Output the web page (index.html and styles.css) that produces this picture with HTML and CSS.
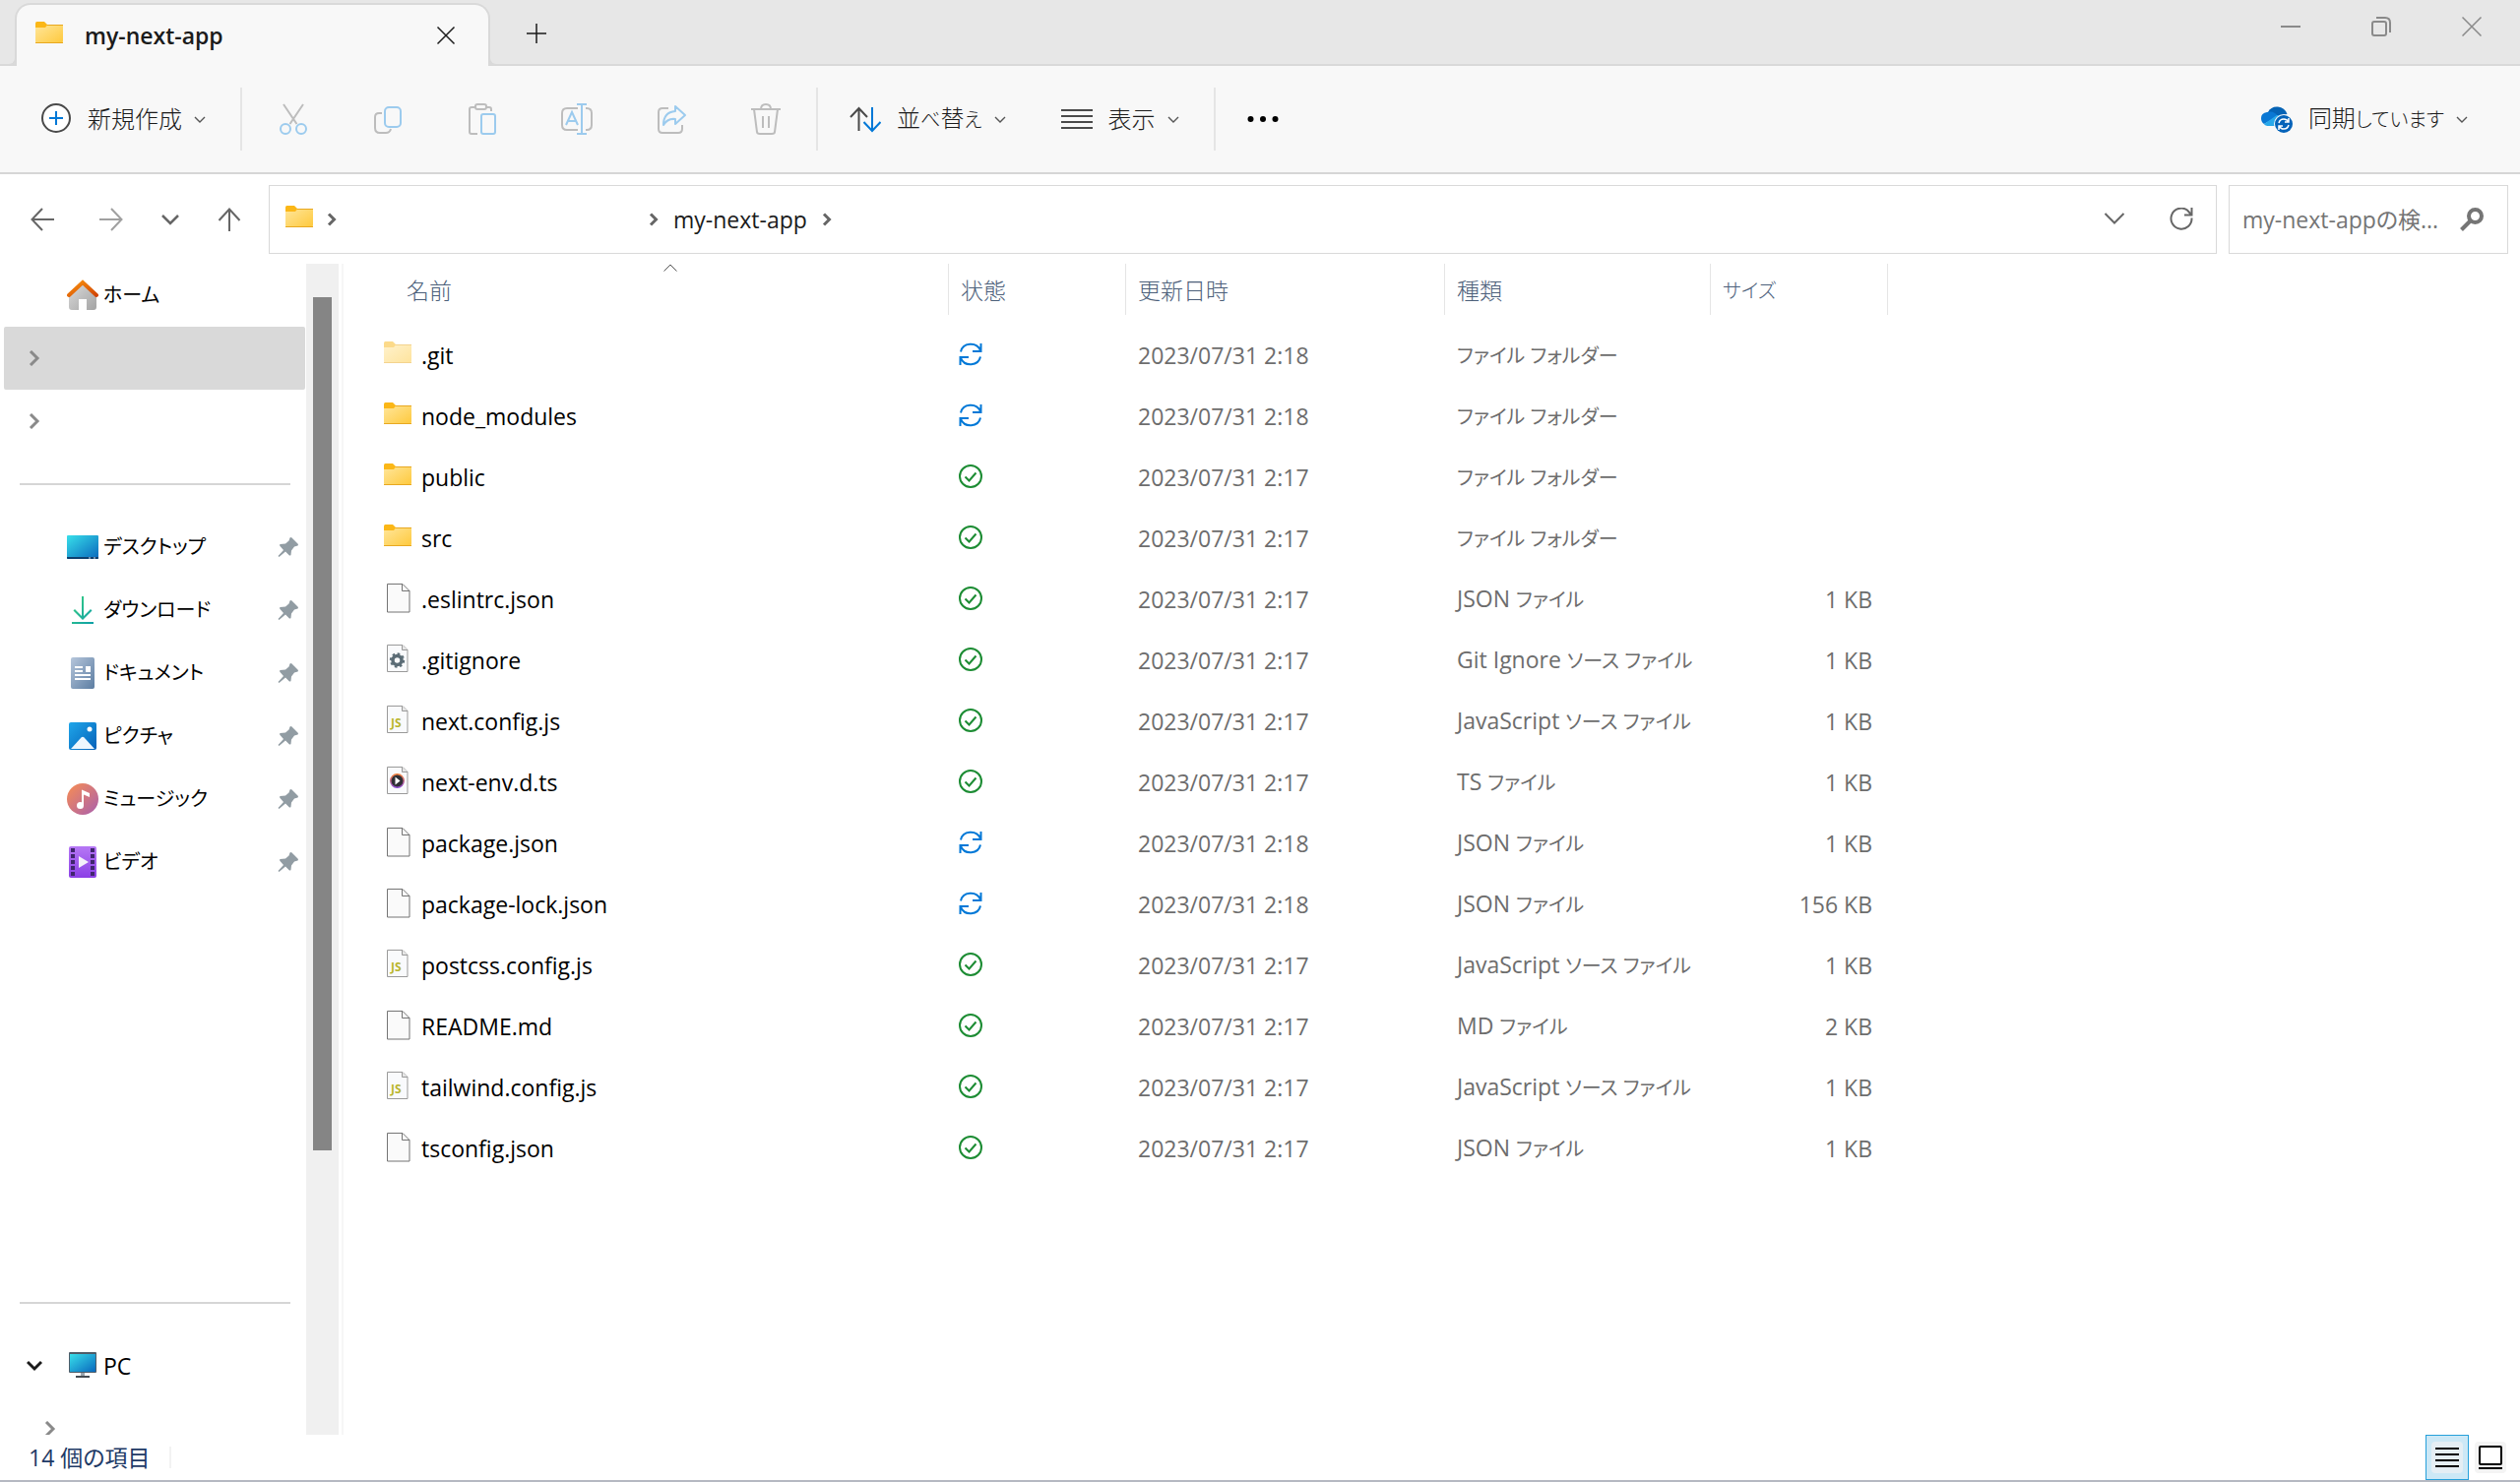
FILE: index.html
```html
<!DOCTYPE html>
<html lang="ja">
<head>
<meta charset="utf-8">
<title>my-next-app</title>
<meta name="viewport" content="width=device-width, initial-scale=1">
<link rel="stylesheet" href="styles.css">
</head>
<body>
<svg class="defs" aria-hidden="true">
  <defs>
    <linearGradient id="gFolder" x1="0" y1="0" x2="1" y2="1"><stop offset="0" stop-color="#ffe69b"/><stop offset="1" stop-color="#fec93c"/></linearGradient>
    <linearGradient id="gRoof" x1="0" y1="0" x2="1" y2="1"><stop offset="0" stop-color="#f9920e"/><stop offset="1" stop-color="#d14405"/></linearGradient>
    <linearGradient id="gWall" x1="0" y1="0" x2="1" y2="1"><stop offset="0" stop-color="#dcdcdc"/><stop offset="1" stop-color="#a3a3a3"/></linearGradient>
    <linearGradient id="gDesk" x1="0" y1="0" x2="1" y2="1"><stop offset="0" stop-color="#38dfea"/><stop offset="1" stop-color="#0968bd"/></linearGradient>
    <linearGradient id="gDown" x1="0" y1="0" x2="1" y2="1"><stop offset="0" stop-color="#3bd080"/><stop offset="1" stop-color="#0d9fa8"/></linearGradient>
    <linearGradient id="gDoc" x1="0" y1="0" x2="1" y2="1"><stop offset="0" stop-color="#b6c6db"/><stop offset="1" stop-color="#5c7da2"/></linearGradient>
    <linearGradient id="gPic" x1="0" y1="0" x2="1" y2="1"><stop offset="0" stop-color="#1fa6ea"/><stop offset="1" stop-color="#0561b8"/></linearGradient>
    <linearGradient id="gMus" x1="0" y1="0" x2="1" y2="1"><stop offset="0" stop-color="#f98e52"/><stop offset="1" stop-color="#a95fae"/></linearGradient>
    <linearGradient id="gVid" x1="0" y1="0" x2="0" y2="1"><stop offset="0" stop-color="#b678f5"/><stop offset="1" stop-color="#8b3fe6"/></linearGradient>
    <linearGradient id="gPlay" x1="0" y1="0" x2="0" y2="1"><stop offset="0" stop-color="#f2803b"/><stop offset="1" stop-color="#8b4ad0"/></linearGradient>
  </defs>
  <symbol id="folder" viewBox="0 0 32 32"><path d="M2 3.500q0-1.500 1.500-1.500h7.500l3 3v4H2z" fill="#fbb717"/><path d="M2 8h10l2.500-3H28.500q1.500 0 1.500 1.500v15q0 2.500-1.500 2.500h-25Q2 24 2 22z" fill="url(#gFolder)"/><path d="M14 5.500H30M2 23.500H30" stroke="#e8a820" fill="none"/></symbol>
  <symbol id="file" viewBox="0 0 32 32"><path d="M5.500.5H21l7 7v21.500H5.500z" fill="#fafafa" stroke="#757575"/><path d="M20.500.5v7H28" fill="none" stroke="#757575"/></symbol>
  <symbol id="page" viewBox="0 0 32 32"><path d="M5.500.5H21l5 5v22H5.500z" fill="#f9fafc" stroke="#9a9a9a"/><path d="M20.500.5v5H26" fill="#e6e6e6" stroke="#9a9a9a"/></symbol>
  <symbol id="gear" viewBox="0 0 32 32"><use href="#page"/><circle cx="15.500" cy="16" r="4.500" fill="none" stroke="#5b6c76" stroke-width="3.500"/><circle cx="15.500" cy="16" r="6.700" fill="none" stroke="#5b6c76" stroke-width="2" stroke-dasharray="2.600 2.660"/></symbol>
  <symbol id="ts" viewBox="0 0 32 32"><use href="#page"/><circle cx="15.500" cy="14.500" r="6.700" fill="#2f2f35" stroke="url(#gPlay)" stroke-width="1.500"/><path d="M13.500 10.500v8l5-4z" fill="#fff"/></symbol>
  <symbol id="ok" viewBox="0 0 28 28"><circle cx="14" cy="13" r="11" fill="none" stroke="#1c8c33" stroke-width="2"/><path d="M8.500 13.500l4 4 7-8" fill="none" stroke="#1c8c33" stroke-width="2"/></symbol>
  <symbol id="sync" viewBox="0 0 28 28"><path d="M4 10.500C6 1 20 0 24 9M24.500 2v8H16M24 15.500C22 25 8 26 4 17M3.500 24v-8H12" fill="none" stroke="#0078d7" stroke-width="2"/></symbol>
  <symbol id="down" viewBox="0 0 12 12"><path d="M1 4l5 5 5-5" fill="none" stroke="#555" stroke-width="1.400"/></symbol>
  <symbol id="right" viewBox="0 0 16 16"><path d="M5 2.500L10.500 8 5 13.500" fill="none" stroke="currentColor" stroke-width="3"/></symbol>
  <symbol id="twist" viewBox="0 0 16 16"><path d="M4 1l7 7-7 7" fill="none" stroke="currentColor" stroke-width="3"/></symbol>
  <symbol id="pin" viewBox="0 0 22 22"><path d="M12.500 1.500q1-1 2 0l6 6q1 1 0 2l-3.500 1-3 4-.5 4.500q-1 1-2 0L8 15.500l-6.500 5.500-1-1L6 14 2.500 10q-1-1 0-2L8 7.500l3.500-3z" fill="#919ca3"/></symbol>
</svg>

<header class="titlebar">
  <div class="tab">
    <svg class="icon32"><use href="#folder"/></svg>
    <h1 class="tab-title">my-next-app</h1>
    <button class="bare" aria-label="タブを閉じる"><svg class="icon20" viewBox="0 0 20 20"><path d="M1.500 1.500l17 17M18.500 1.500l-17 17" stroke="#1b1b1b" stroke-width="1.500"/></svg></button>
  </div>
  <button class="bare new-tab" aria-label="新しいタブ"><svg class="icon20" viewBox="0 0 20 20"><path d="M10 0v20M0 10h20" stroke="#1b1b1b" stroke-width="1.500"/></svg></button>
  <div class="window-buttons">
    <button class="bare" aria-label="最小化"><svg class="icon20" viewBox="0 0 20 20"><path d="M0 10h20" stroke="#8a8a8a" stroke-width="2"/></svg></button>
    <button class="bare" aria-label="元に戻す"><svg class="icon20" viewBox="0 0 20 20"><rect x="1" y="5" width="14" height="14" rx="2" fill="none" stroke="#8a8a8a" stroke-width="2"/><path d="M5 1h9q5 0 5 5v10" fill="none" stroke="#8a8a8a" stroke-width="2"/></svg></button>
    <button class="bare" aria-label="閉じる"><svg class="icon20" viewBox="0 0 20 20"><path d="M.5.5l19 19M19.500.5l-19 19" stroke="#8a8a8a" stroke-width="1.500"/></svg></button>
  </div>
</header>

<div class="toolbar" role="toolbar">
  <button class="bare command"><svg class="icon32" viewBox="0 0 32 32"><circle cx="16" cy="15" r="14" fill="#fff" stroke="#4a4a4a" stroke-width="2"/><path d="M16 8v14M9 15h14" stroke="#0078d7" stroke-width="2"/></svg><span>新規作成</span><svg class="icon12"><use href="#down"/></svg></button>
  <span class="sep"></span>
  <div class="icons">
    <button class="bare" aria-label="切り取り"><svg class="icon32" viewBox="0 0 32 32" fill="none" stroke-width="2"><path d="M6 1l13.500 20M26 1L12.500 21" stroke="#bdbdbd"/><circle cx="8" cy="26" r="5" stroke="#9ccbee"/><circle cx="24" cy="26" r="5" stroke="#9ccbee"/></svg></button>
    <button class="bare" aria-label="コピー"><svg class="icon32" viewBox="0 0 32 32" fill="none" stroke-width="2"><path d="M10 10H7q-4 0-4 4v11q0 5 5 5h6q4 0 5-4" stroke="#bdbdbd"/><rect x="13" y="4" width="16" height="20" rx="4" stroke="#9ccbee"/></svg></button>
    <button class="bare" aria-label="貼り付け"><svg class="icon32" viewBox="0 0 32 32" fill="none" stroke-width="2"><path d="M11 31H5q-2 0-2-2V6q0-2 2-2h4M20 4h3q2 0 2 2v2" stroke="#bdbdbd"/><rect x="9" y="1" width="11" height="5" rx="2" stroke="#bdbdbd"/><rect x="15" y="11" width="14" height="20" rx="2" stroke="#9ccbee"/></svg></button>
    <button class="bare" aria-label="名前の変更"><svg class="icon32" viewBox="0 0 32 32" fill="none" stroke-width="2"><path d="M17 5H6Q1 5 1 10v12q0 5 5 5h11M25 5h1q5 0 5 5v12q0 5-5 5h-1" stroke="#bdbdbd"/><path d="M5 22l6-13 6 13M7 18h8M21 1v30M16 1h10M16 31h10" stroke="#9ccbee"/></svg></button>
    <button class="bare" aria-label="共有"><svg class="icon32" viewBox="0 0 32 32" fill="none" stroke-width="2"><path d="M13 5H7Q3 5 3 9v17q0 4 4 4h16q4 0 4-4v-4" stroke="#bdbdbd"/><path d="M20 3l10 9-10 9v-5q-8-1-12 6 0-13 12-14z" stroke="#9ccbee" stroke-linejoin="round"/></svg></button>
    <button class="bare" aria-label="削除"><svg class="icon32" viewBox="0 0 32 32" fill="none" stroke="#bdbdbd" stroke-width="2"><path d="M1 6h30M11 6q0-5 5-5t5 5M4 6l3 23q0 2 3 2h12q3 0 3-2l3-23M13 13v12M19 13v12"/></svg></button>
  </div>
  <span class="sep"></span>
  <button class="bare command"><svg class="icon32" viewBox="0 0 32 32" fill="none"><path d="M9.500 28V5M1 14l8.500-9 8.500 9" stroke="#4a4a4a" stroke-width="2"/><path d="M23 4v24M14.500 19l8.500 9 8.500-9" stroke="#0078d7" stroke-width="2"/></svg><span>並<span class="kana">べ</span>替<span class="kana">え</span></span><svg class="icon12"><use href="#down"/></svg></button>
  <button class="bare command"><svg class="icon32" viewBox="0 0 32 32"><path d="M0 7h32M0 13h32M0 19h32M0 25h32" stroke="#4a4a4a" stroke-width="2"/></svg><span>表示</span><svg class="icon12"><use href="#down"/></svg></button>
  <span class="sep"></span>
  <button class="bare more" aria-label="もっと見る"><svg class="icon32" viewBox="0 0 32 32"><circle cx="3.500" cy="16" r="3"/><circle cx="16" cy="16" r="3"/><circle cx="28.500" cy="16" r="3"/></svg></button>
  <button class="bare command status"><svg class="icon32" viewBox="0 0 32 32"><path d="M7 9q3-6 10-5.500 7 .5 9.500 7.500L16 14z" fill="#0563b5"/><path d="M6 9q7-2 11 4l-14 8q-3-2-3-6 0-5 6-6z" fill="#0a78d4"/><path d="M3 21l13-9 9 1v10H8q-4 0-5-2z" fill="#28a8ea"/><circle cx="23" cy="21" r="10" fill="#f8f8f8"/><circle cx="23" cy="21" r="9" fill="#0563b9"/><path d="M18 20q1-4 5-4 3 0 5 3M28 15v4h-4M28 22q-1 4-5 4-3 0-5-3M18 27v-4h4" fill="none" stroke="#fff" stroke-width="1.500"/></svg><span>同期<span class="kana">しています</span></span><svg class="icon12"><use href="#down"/></svg></button>
</div>

<nav class="navbar">
  <div class="history">
    <button class="bare" aria-label="戻る"><svg class="icon24" viewBox="0 0 24 24"><path d="M24 12H2M12 1L1.500 12 12 23" fill="none" stroke="#666" stroke-width="2"/></svg></button>
    <button class="bare" aria-label="進む"><svg class="icon24" viewBox="0 0 24 24"><path d="M0 12h22M12 1l10.500 11L12 23" fill="none" stroke="#a0a0a0" stroke-width="2"/></svg></button>
    <button class="bare" aria-label="最近表示した場所"><svg class="icon24" viewBox="0 0 24 24"><path d="M4 8l8 8 8-8" fill="none" stroke="#666" stroke-width="2.500"/></svg></button>
    <button class="bare" aria-label="上へ"><svg class="icon24" viewBox="0 0 24 24"><path d="M12 24V2M1.500 13L12 1.500 22.500 13" fill="none" stroke="#666" stroke-width="2"/></svg></button>
  </div>
  <div class="address">
    <svg class="icon32"><use href="#folder"/></svg>
    <svg class="icon16 crumb-root"><use href="#right"/></svg>
    <svg class="icon16"><use href="#right"/></svg>
    <a class="crumb" href="#">my-next-app</a>
    <svg class="icon16"><use href="#right"/></svg>
    <div class="address-tools">
      <button class="bare" aria-label="履歴"><svg class="icon24" viewBox="0 0 24 24"><path d="M2.500 6l9.500 9.500L21.500 6" fill="none" stroke="#666" stroke-width="2"/></svg></button>
      <button class="bare" aria-label="最新の情報に更新"><svg class="icon24" viewBox="0 0 24 24"><path d="M22.500 10.500A10.500 10.500 0 1 1 18 2.500L22 7M22.500 0v7.500H15" fill="none" stroke="#666" stroke-width="2"/></svg></button>
    </div>
  </div>
  <label class="search">
    <input type="text" placeholder="my-next-appの検..." aria-label="検索">
    <svg class="icon24" viewBox="0 0 24 24"><circle cx="15.500" cy="8.500" r="6.500" fill="none" stroke="#757575" stroke-width="4"/><path d="M10.500 13.500L1.500 22.500" stroke="#757575" stroke-width="4"/></svg>
  </label>
</nav>

<main class="body">
  <aside class="sidebar">
    <a class="place" href="#"><svg class="icon32" viewBox="0 0 32 32"><path d="M2 14L16 3l14 11v14q0 3-3 3h-7V20h-8v11H5q-3 0-3-3z" fill="url(#gWall)"/><path d="M2 16L16 3l14 13" fill="none" stroke="url(#gRoof)" stroke-width="4" stroke-linecap="round"/></svg><span class="kana">ホーム</span></a>
    <div class="place selected"><svg class="icon16 twist"><use href="#twist"/></svg></div>
    <div class="place"><svg class="icon16 twist"><use href="#twist"/></svg></div>
    <hr>
    <a class="place" href="#"><svg class="icon32" viewBox="0 0 32 32"><rect y="4" width="32" height="24" rx="1" fill="url(#gDesk)"/><path d="M0 26h32v1q0 1-1 1H1q-1 0-1-1z" fill="#0d3f6e"/><path d="M22 27h2M27 27h2" stroke="#cde" stroke-width="1"/></svg><span class="kana">デスクトップ</span><svg class="pin"><use href="#pin"/></svg></a>
    <a class="place" href="#"><svg class="icon32" viewBox="0 0 32 32"><path d="M15 2h2v20l7-7 1.500 1.500L16 26 6.500 16.500 8 15l7 7zM5 28h22v2H5z" fill="url(#gDown)"/></svg><span class="kana">ダウンロード</span><svg class="pin"><use href="#pin"/></svg></a>
    <a class="place" href="#"><svg class="icon32" viewBox="0 0 32 32"><rect x="4" width="24" height="32" rx="2" fill="url(#gDoc)"/><path d="M8 10h8M8 14h8M8 18h16M8 22h16" stroke="#fff" stroke-width="2"/><rect x="19" y="9" width="5" height="6" fill="#fff"/></svg><span class="kana">ドキュメント</span><svg class="pin"><use href="#pin"/></svg></a>
    <a class="place" href="#"><svg class="icon32" viewBox="0 0 32 32"><rect x="2" y="2" width="28" height="28" rx="2" fill="url(#gPic)"/><path d="M4 29l10.500-11.500q1.500-1.500 3 0L28 29z" fill="#eef6fd"/><circle cx="23" cy="9" r="2.500" fill="#fff"/></svg><span class="kana">ピクチャ</span><svg class="pin"><use href="#pin"/></svg></a>
    <a class="place" href="#"><svg class="icon32" viewBox="0 0 32 32"><circle cx="16" cy="16" r="16" fill="url(#gMus)"/><circle cx="13.500" cy="22.500" r="3.500" fill="#fff"/><path d="M15 22.500V6.500l8 3.500v4l-6-2.500v11z" fill="#fff"/></svg><span class="kana">ミュージック</span><svg class="pin"><use href="#pin"/></svg></a>
    <a class="place" href="#"><svg class="icon32" viewBox="0 0 32 32"><rect x="2" width="28" height="32" rx="2" fill="url(#gVid)"/><path d="M6 2v30M26 2v30" stroke="#40256e" stroke-width="4" stroke-dasharray="4 2"/><path d="M12 10v12l10-6z" fill="#f4f0fa"/></svg><span class="kana">ビデオ</span><svg class="pin"><use href="#pin"/></svg></a>
    <div class="filler"></div>
    <hr>
    <a class="place" href="#"><svg class="icon16 twist open" viewBox="0 0 16 16"><path d="M1 4l7 7 7-7" fill="none" stroke="#1b1b1b" stroke-width="3"/></svg><svg class="icon32" viewBox="0 0 32 32"><rect x="2" y="2" width="28" height="21" rx="1" fill="#4e5c68"/><rect x="3" y="4" width="26" height="18" fill="url(#gDesk)"/><path d="M14 23h4v3h-4z" fill="#9aa4ad"/><path d="M9 26h14v2H9z" fill="#454b52"/></svg><span>PC</span></a>
    <div class="place cut"><svg class="icon16 twist"><use href="#twist"/></svg></div>
  </aside>
  <div class="scrollbar"><div class="thumb"></div></div>
  <section class="pane">
    <table class="files">
      <colgroup><col class="c-name"><col class="c-state"><col class="c-date"><col class="c-type"><col class="c-size"></colgroup>
      <thead><tr>
        <th>名前<svg class="sort" viewBox="0 0 14 8"><path d="M.5 7.500L7 1l6.500 6.500" fill="none" stroke="#555"/></svg></th><th>状態</th><th>更新日時</th><th>種類</th><th><span class="kana">サイズ</span></th>
      </tr></thead>
      <tbody>
        <tr><td><span class="name"><svg class="icon32 faded"><use href="#folder"/></svg>.git</span></td><td><svg class="icon28"><use href="#sync"/></svg></td><td>2023/07/31 2:18</td><td><span class="kana">ファイル フォルダー</span></td><td></td></tr>
        <tr><td><span class="name"><svg class="icon32"><use href="#folder"/></svg>node_modules</span></td><td><svg class="icon28"><use href="#sync"/></svg></td><td>2023/07/31 2:18</td><td><span class="kana">ファイル フォルダー</span></td><td></td></tr>
        <tr><td><span class="name"><svg class="icon32"><use href="#folder"/></svg>public</span></td><td><svg class="icon28"><use href="#ok"/></svg></td><td>2023/07/31 2:17</td><td><span class="kana">ファイル フォルダー</span></td><td></td></tr>
        <tr><td><span class="name"><svg class="icon32"><use href="#folder"/></svg>src</span></td><td><svg class="icon28"><use href="#ok"/></svg></td><td>2023/07/31 2:17</td><td><span class="kana">ファイル フォルダー</span></td><td></td></tr>
        <tr><td><span class="name"><svg class="icon32"><use href="#file"/></svg>.eslintrc.json</span></td><td><svg class="icon28"><use href="#ok"/></svg></td><td>2023/07/31 2:17</td><td>JSON <span class="kana">ファイル</span></td><td>1 KB</td></tr>
        <tr><td><span class="name"><svg class="icon32"><use href="#gear"/></svg>.gitignore</span></td><td><svg class="icon28"><use href="#ok"/></svg></td><td>2023/07/31 2:17</td><td>Git Ignore <span class="kana">ソース ファイル</span></td><td>1 KB</td></tr>
        <tr><td><span class="name"><svg class="icon32" viewBox="0 0 32 32"><use href="#page"/><text class="js" x="9" y="22">JS</text></svg>next.config.js</span></td><td><svg class="icon28"><use href="#ok"/></svg></td><td>2023/07/31 2:17</td><td>JavaScript <span class="kana">ソース ファイル</span></td><td>1 KB</td></tr>
        <tr><td><span class="name"><svg class="icon32"><use href="#ts"/></svg>next-env.d.ts</span></td><td><svg class="icon28"><use href="#ok"/></svg></td><td>2023/07/31 2:17</td><td>TS <span class="kana">ファイル</span></td><td>1 KB</td></tr>
        <tr><td><span class="name"><svg class="icon32"><use href="#file"/></svg>package.json</span></td><td><svg class="icon28"><use href="#sync"/></svg></td><td>2023/07/31 2:18</td><td>JSON <span class="kana">ファイル</span></td><td>1 KB</td></tr>
        <tr><td><span class="name"><svg class="icon32"><use href="#file"/></svg>package-lock.json</span></td><td><svg class="icon28"><use href="#sync"/></svg></td><td>2023/07/31 2:18</td><td>JSON <span class="kana">ファイル</span></td><td>156 KB</td></tr>
        <tr><td><span class="name"><svg class="icon32" viewBox="0 0 32 32"><use href="#page"/><text class="js" x="9" y="22">JS</text></svg>postcss.config.js</span></td><td><svg class="icon28"><use href="#ok"/></svg></td><td>2023/07/31 2:17</td><td>JavaScript <span class="kana">ソース ファイル</span></td><td>1 KB</td></tr>
        <tr><td><span class="name"><svg class="icon32"><use href="#file"/></svg>README.md</span></td><td><svg class="icon28"><use href="#ok"/></svg></td><td>2023/07/31 2:17</td><td>MD <span class="kana">ファイル</span></td><td>2 KB</td></tr>
        <tr><td><span class="name"><svg class="icon32" viewBox="0 0 32 32"><use href="#page"/><text class="js" x="9" y="22">JS</text></svg>tailwind.config.js</span></td><td><svg class="icon28"><use href="#ok"/></svg></td><td>2023/07/31 2:17</td><td>JavaScript <span class="kana">ソース ファイル</span></td><td>1 KB</td></tr>
        <tr><td><span class="name"><svg class="icon32"><use href="#file"/></svg>tsconfig.json</span></td><td><svg class="icon28"><use href="#ok"/></svg></td><td>2023/07/31 2:17</td><td>JSON <span class="kana">ファイル</span></td><td>1 KB</td></tr>
      </tbody>
    </table>
  </section>
</main>

<footer class="statusbar">
  <span class="count">14 個の項目</span>
  <div class="views">
    <button class="view active" aria-label="詳細"><svg class="icon32" viewBox="0 0 32 32"><rect width="32" height="32" rx="4" fill="#e5eef4"/><path d="M4 7h24M4 13h24M4 19h24M4 25h24" stroke="#000" stroke-width="2"/></svg></button>
    <button class="view" aria-label="大アイコン"><svg class="icon32" viewBox="0 0 32 32"><rect width="32" height="32" rx="4" fill="#f4f4f4"/><rect x="5" y="5" width="22" height="18" rx="1" fill="#fff" stroke="#000" stroke-width="2"/><path d="M4 27h24" stroke="#000" stroke-width="2"/></svg></button>
  </div>
</footer>
</body>
</html>
```

FILE: styles.css
```css
* {
  box-sizing: border-box;
}

body {
  margin: 0;
  min-height: 100vh;
  display: flex;
  flex-direction: column;
  background: #fff;
  color: #000;
  font-family: "Open Sans", "Noto Sans CJK JP", sans-serif;
  font-size: 23px;
  line-height: 32px;
  font-feature-settings: "palt";
}

a {
  color: inherit;
  text-decoration: none;
}

svg {
  flex: none;
  display: block;
}

.defs {
  position: absolute;
  width: 0;
  height: 0;
}

.icon12 { width: 12px; height: 12px; }
.icon16 { width: 16px; height: 16px; }
.icon20 { width: 20px; height: 20px; }
.icon24 { width: 24px; height: 24px; }
.icon28 { width: 28px; height: 28px; }
.icon32 { width: 32px; height: 32px; }

.kana {
  font-size: 20px;
}

.bare {
  padding: 0;
  border: 0;
  background: none;
  color: #1b1b1b;
  font: inherit;
  font-feature-settings: inherit;
}

/* Title bar */
.titlebar {
  display: flex;
  height: 67px;
  padding: 3px 39px 0 15px;
  background: #e7e7e7;
  border-bottom: 2px solid #d9d9d9;
}

.tab {
  position: relative;
  display: flex;
  align-items: center;
  gap: 20px;
  width: 483px;
  height: 64px;
  padding: 0 33px 0 17px;
  background: #f8f8f8;
  border: 2px solid #d9d9d9;
  border-bottom: 0;
  border-radius: 16px 16px 0 0;
}

.tab::before,
.tab::after {
  content: "";
  position: absolute;
  bottom: 0;
  width: 10px;
  height: 10px;
  border-bottom: 2px solid #d9d9d9;
}

.tab::before {
  right: 100%;
  border-right: 2px solid #d9d9d9;
  border-bottom-right-radius: 8px;
}

.tab::after {
  left: 100%;
  border-left: 2px solid #d9d9d9;
  border-bottom-left-radius: 8px;
}

.tab-title {
  flex: 1;
  margin: 0;
  color: #1b1b1b;
  font-size: 23px;
  font-weight: 600;
}

.new-tab {
  margin-left: 37px;
}

.window-buttons {
  display: flex;
  gap: 72px;
  height: 48px;
  margin-left: auto;
}

/* Command bar */
.toolbar {
  display: flex;
  align-items: center;
  height: 110px;
  padding: 0 53px 0 41px;
  background: #f8f8f8;
  border-bottom: 2px solid #d6d6d6;
}

.command {
  display: flex;
  align-items: center;
  gap: 16px;
  font-size: 24px;
  font-weight: 300;
}

.command .icon12 {
  margin-left: -4px;
}

.sep {
  width: 2px;
  height: 64px;
  margin: 0 32px 0 35px;
  background: #e5e5e5;
}

.icons {
  display: flex;
  gap: 64px;
  padding-left: 4px;
}

.command + .command {
  margin-left: 56px;
}

.status {
  margin-left: auto;
}

/* Navigation row */
.navbar {
  display: flex;
  align-items: center;
  height: 91px;
  padding: 0 12px 0 31px;
}

.history {
  display: flex;
  gap: 46px;
  width: 242px;
}

.history .bare:nth-child(3) {
  margin: 0 -10px;
}

.address,
.search {
  display: flex;
  align-items: center;
  height: 70px;
  border: 1px solid #d9d9d9;
}

.address {
  flex: 1;
  gap: 9px;
  margin-right: 12px;
  padding: 0 23px 0 14px;
  color: #666;
}

.crumb-root {
  margin-right: 302px;
}

.crumb {
  padding: 0 3px;
  color: #1b1b1b;
}

.address-tools {
  display: flex;
  gap: 44px;
  margin-left: auto;
}

.search {
  width: 284px;
  padding: 0 24px 0 13px;
}

.search input {
  flex: 1;
  min-width: 0;
  padding: 0;
  border: 0;
  outline: 0;
  background: none;
  font: inherit;
  font-feature-settings: inherit;
}

.search input::placeholder {
  color: #757575;
}

/* Body */
.body {
  flex: 1;
  display: flex;
}

.sidebar {
  display: flex;
  flex-direction: column;
  width: 311px;
  padding: 0 1px 0 4px;
}

.place {
  display: flex;
  align-items: center;
  gap: 5px;
  height: 64px;
  padding: 0 6px 0 64px;
}

.selected {
  background: #d9d9d9;
  border-radius: 2px;
}

.twist {
  margin-left: -41px;
  color: #8a8a8a;
}

.open {
  margin-right: 20px;
}

.cut {
  height: 38px;
  padding-left: 80px;
  align-items: flex-start;
  overflow: hidden;
}

.cut .twist {
  margin-top: 24px;
}

.pin {
  width: 22px;
  height: 22px;
  margin-left: auto;
}

.filler {
  flex: 1;
}

.sidebar hr {
  width: 275px;
  height: 2px;
  margin: 31px 0 31px 16px;
  border: 0;
  background: #d6d6d6;
}

.scrollbar {
  width: 33px;
  padding: 34px 7px 0;
  background: #f0f0f0;
}

.thumb {
  height: 75%;
  background: #858585;
}

.pane {
  flex: 1;
  margin-left: 3px;
  border-left: 2px solid #f6f6f6;
}

/* File list */
.files {
  table-layout: fixed;
  width: 1569px;
  border-collapse: separate;
  border-spacing: 0;
}

.c-name { width: 615px; }
.c-state { width: 180px; }
.c-date { width: 324px; }
.c-type { width: 270px; }
.c-size { width: 180px; }

.files th {
  position: relative;
  height: 52px;
  padding: 2px 0 0 12px;
  border-right: 1px solid #e5e5e5;
  color: #4c607a;
  font-weight: 300;
  text-align: left;
}

.files th:first-child {
  padding-left: 64px;
}

.sort {
  position: absolute;
  top: 0;
  left: 325px;
  width: 14px;
  height: 8px;
}

.files tbody::before {
  content: "";
  display: block;
  height: 10px;
}

.files td {
  height: 62px;
  padding: 0 0 0 12px;
  color: #6d6d6d;
  white-space: nowrap;
}

.files td:first-child {
  padding-left: 39px;
  color: #000;
}

.files td:nth-child(2) {
  padding-left: 8px;
}

.files td:last-child {
  padding-right: 16px;
  text-align: right;
}

.name {
  display: flex;
  align-items: center;
  gap: 8px;
}

.js {
  fill: #b9b62c;
  font-size: 12px;
  font-weight: 700;
}

.faded {
  opacity: 0.5;
}

/* Status bar */
.statusbar {
  display: flex;
  justify-content: space-between;
  align-items: center;
  height: 48px;
  padding: 0 8px 0 29px;
  border-bottom: 2px solid #b5b9c2;
  color: #1e3a66;
}

.count {
  padding-right: 20px;
  border-right: 2px solid #f2f2f2;
  line-height: 22px;
}

.views {
  display: flex;
}

.view {
  display: flex;
  align-items: center;
  justify-content: center;
  width: 44px;
  height: 46px;
  padding: 0;
  border: 0;
  background: none;
}

.active {
  border: 1px solid #26a0da;
  background: #cce8f6;
}
```
